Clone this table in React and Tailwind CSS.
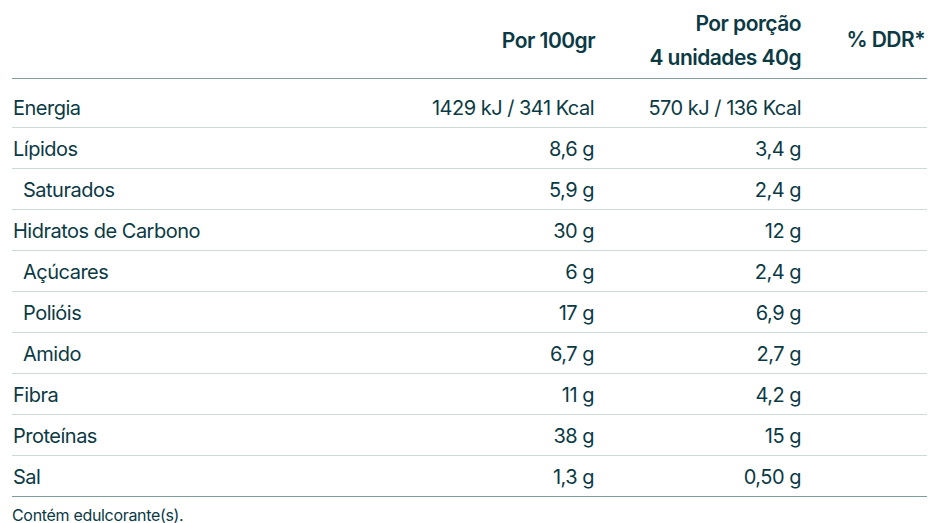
import React from "react";

const rows = [
  { label: "Energia", a: "1429 kJ / 341 Kcal", b: "570 kJ / 136 Kcal", first: true },
  { label: "Lípidos", a: "8,6 g", b: "3,4 g" },
  { label: "Saturados", a: "5,9 g", b: "2,4 g", sub: true },
  { label: "Hidratos de Carbono", a: "30 g", b: "12 g" },
  { label: "Açúcares", a: "6 g", b: "2,4 g", sub: true },
  { label: "Polióis", a: "17 g", b: "6,9 g", sub: true },
  { label: "Amido", a: "6,7 g", b: "2,7 g", sub: true },
  { label: "Fibra", a: "11 g", b: "4,2 g" },
  { label: "Proteínas", a: "38 g", b: "15 g" },
  { label: "Sal", a: "1,3 g", b: "0,50 g", last: true },
];

export default function App() {
  return (
    <div
      className="w-[939px] h-[523px] overflow-hidden bg-white px-3 text-[#0b3a45]"
      style={{ fontFamily: "Inter, 'Noto Sans', sans-serif" }}
    >
      <div className="flex h-[79px] items-center border-b border-[#7f9c9e] pt-[4px] text-[21px] font-semibold tracking-[-0.025em]">
        <div className="flex-1" />
        <div className="w-[200px] pr-[1px] text-right leading-[34px]">Por 100gr</div>
        <div className="w-[205px] text-right leading-[34px]">
          <div>Por porção</div>
          <div>4 unidades 40g</div>
        </div>
        <div className="mb-[2px] w-[126px] pr-[2px] text-right leading-[34px]">% DDR*</div>
      </div>
      {rows.map((r) => (
        <div
          key={r.label}
          className={
            "flex items-center border-b text-[20px] tracking-[-0.025em] " +
            (r.first ? "h-[49px] pt-[10px] " : "h-[41px] pt-[2px] ") +
            (r.last ? "border-[#7f9c9e]" : "border-[#cdd8d8]")
          }
        >
          <div className={"flex-1 " + (r.sub ? "pl-[11px]" : "pl-[1px]")}>{r.label}</div>
          <div className="w-[200px] pr-[2px] text-right">{r.a}</div>
          <div className="w-[205px] text-right">{r.b}</div>
          <div className="w-[126px]" />
        </div>
      ))}
      <div className="mt-[8px] text-[16px] leading-[20px] tracking-[-0.02em]">Contém edulcorante(s).</div>
    </div>
  );
}
